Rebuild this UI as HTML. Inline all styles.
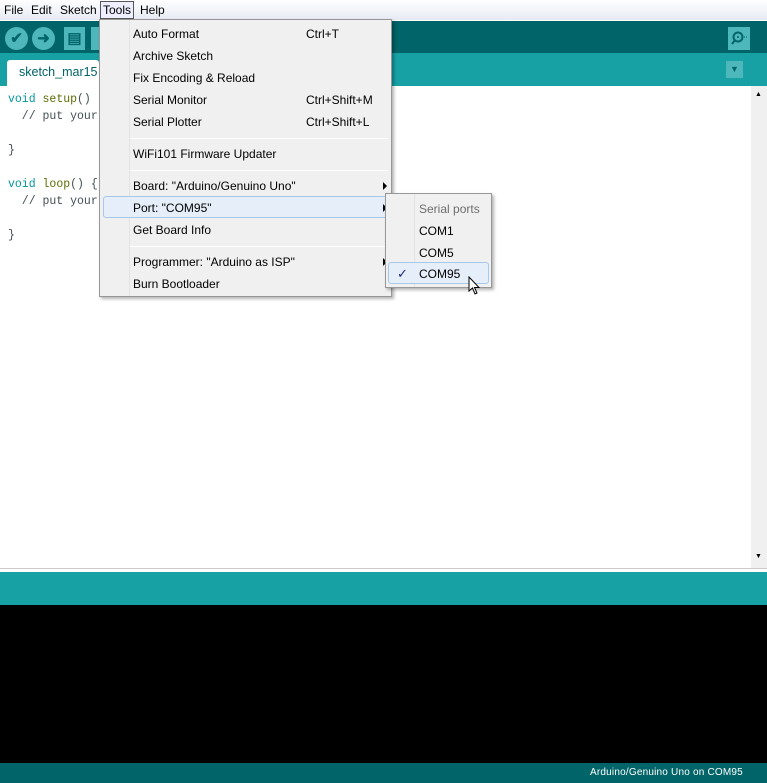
<!DOCTYPE html>
<html><head><style>
*{margin:0;padding:0;box-sizing:border-box}
body{width:767px;height:783px;overflow:hidden;position:relative;font-family:"Liberation Sans",sans-serif;font-size:12px;background:#fff}
.abs{position:absolute}
#menubar{left:0;top:0;width:767px;height:20px;background:linear-gradient(#fff,#e6eaf3);}
#menubar span{position:absolute;top:3px}
#tool{left:0;top:20px;width:767px;height:33px;background:#006468;border-top:1px solid #fff}
.btn{position:absolute;top:6px;width:23px;height:23px;border-radius:50%;background:#4db7bb;color:#006468;font-size:15px;font-weight:bold;text-align:center;line-height:23px}
#tabs{left:0;top:53px;width:767px;height:33px;background:#17a1a5}
#tab{left:7px;top:60px;width:92px;height:26px;background:#fff;border-radius:3px 3px 0 0;color:#006468;font-size:12.5px;padding:5px 0 0 12px}
pre{position:absolute;left:8px;top:91px;font-family:"Liberation Mono",monospace;font-size:11.5px;line-height:17px;color:#434f54}
#sb{left:751px;top:86px;width:16px;height:482px;background:#f0f0f0}
#menu{left:99px;top:19px;width:293px;height:278px;background:#f0f0f0;border:1px solid #979797;box-shadow:2px 2px 3px rgba(0,0,0,.3)}
.mi{position:absolute;left:33px;font-size:12px;color:#000}
.sc{position:absolute;left:206px}
.sep{position:absolute;left:30px;width:258px;height:1px;background:#d7d7d7;border-bottom:1px solid #fff}
#sub{left:385px;top:193px;width:107px;height:95px;background:#f0f0f0;border:1px solid #979797;box-shadow:2px 2px 3px rgba(0,0,0,.3)}
.arr{position:absolute;left:283px;width:0;height:0;border-left:4px solid #000;border-top:4px solid transparent;border-bottom:4px solid transparent}
</style></head><body>
<div id="menubar" class="abs"><span style="left:4px">File</span><span style="left:31px">Edit</span><span style="left:60px">Sketch</span><span style="left:100px;top:1px;border:1px solid #555;padding:1px 2px;background:#eef;">Tools</span><span style="left:140px">Help</span></div>
<div id="tool" class="abs">
<div class="btn" style="left:5px">✔</div><div class="btn" style="left:32px">➜</div>
<div class="btn" style="left:64px;border-radius:0;width:21px">▤</div><div class="btn" style="left:91px;border-radius:0;width:8px"></div>
<div class="btn" style="left:728px;border-radius:0;width:22px"><svg width="22" height="23" viewBox="0 0 22 23"><circle cx="10" cy="10" r="4.5" fill="none" stroke="#006468" stroke-width="2"/><path d="M7 13 L4 17" stroke="#006468" stroke-width="2"/><circle cx="10" cy="10" r="1" fill="#006468"/><path d="M16 10h1M18 10h1" stroke="#006468"/></svg></div></div>
<div id="tabs" class="abs"><div class="abs" style="left:726px;top:8px;width:17px;height:17px;background:#4db7bb;color:#006468;font-size:9px;text-align:center;line-height:17px">▼</div></div>
<div id="tab" class="abs">sketch_mar15</div>
<pre><span style="color:#00979c">void</span> <span style="color:#5e6d03">setup</span>()
  // put your

}

<span style="color:#00979c">void</span> <span style="color:#5e6d03">loop</span>() {
  // put your

}</pre>
<div id="sb" class="abs"><div style="position:absolute;left:4px;top:5px;font-size:7px">▲</div><div style="position:absolute;left:4px;top:467px;font-size:7px">▼</div></div>
<div class="abs" style="left:0;top:568px;width:767px;height:4px;background:#fff;border-top:1px solid #ccc"></div>
<div class="abs" style="left:0;top:572px;width:767px;height:33px;background:#17a1a5"></div>
<div class="abs" style="left:0;top:605px;width:767px;height:158px;background:#000"></div>
<div class="abs" style="left:0;top:763px;width:767px;height:20px;background:#006468;color:#fff;font-size:10px"><span style="position:absolute;left:590px;top:4px;letter-spacing:.2px">Arduino/Genuino Uno on COM95</span></div>
<div id="menu" class="abs">
<div class="abs" style="left:29px;top:0;width:1px;height:276px;background:#e2e3e3"></div>
<div class="mi" style="top:7px">Auto Format</div><div class="mi sc" style="top:7px">Ctrl+T</div>
<div class="mi" style="top:29px">Archive Sketch</div>
<div class="mi" style="top:51px">Fix Encoding &amp; Reload</div>
<div class="mi" style="top:73px">Serial Monitor</div><div class="mi sc" style="top:73px">Ctrl+Shift+M</div>
<div class="mi" style="top:95px">Serial Plotter</div><div class="mi sc" style="top:95px">Ctrl+Shift+L</div>
<div class="sep" style="top:118px"></div>
<div class="mi" style="top:127px">WiFi101 Firmware Updater</div>
<div class="sep" style="top:150px"></div>
<div class="mi" style="top:159px">Board: "Arduino/Genuino Uno"</div><div class="arr" style="top:162px"></div>
<div class="abs" style="left:3px;top:176px;width:285px;height:22px;background:#e5eef9;border:1px solid #a8c8ea;border-radius:3px"></div>
<div class="mi" style="top:181px">Port: "COM95"</div><div class="arr" style="top:184px"></div>
<div class="mi" style="top:203px">Get Board Info</div>
<div class="sep" style="top:226px"></div>
<div class="mi" style="top:235px">Programmer: "Arduino as ISP"</div><div class="arr" style="top:238px"></div>
<div class="mi" style="top:257px">Burn Bootloader</div>
</div>
<div id="sub" class="abs">
<div class="abs" style="left:28px;top:0;width:1px;height:93px;background:#e2e3e3"></div>
<div class="mi" style="left:33px;top:8px;color:#6d6d6d">Serial ports</div>
<div class="mi" style="top:30px">COM1</div>
<div class="mi" style="top:52px">COM5</div>
<div class="abs" style="left:2px;top:68px;width:101px;height:22px;background:#e5eef9;border:1px solid #a8c8ea;border-radius:3px"></div>
<div class="mi" style="left:11px;top:72px;color:#1d2a7a;font-size:13px">✓</div>
<div class="mi" style="top:73px">COM95</div>
</div>
<svg class="abs" style="left:468px;top:276px" width="13" height="20" viewBox="0 0 13 20"><path d="M1 1 L1 15 L4.5 12 L7 18 L9 17 L6.5 11.5 L11 11.5 Z" fill="#fff" stroke="#000" stroke-width="1"/></svg>
</body></html>
